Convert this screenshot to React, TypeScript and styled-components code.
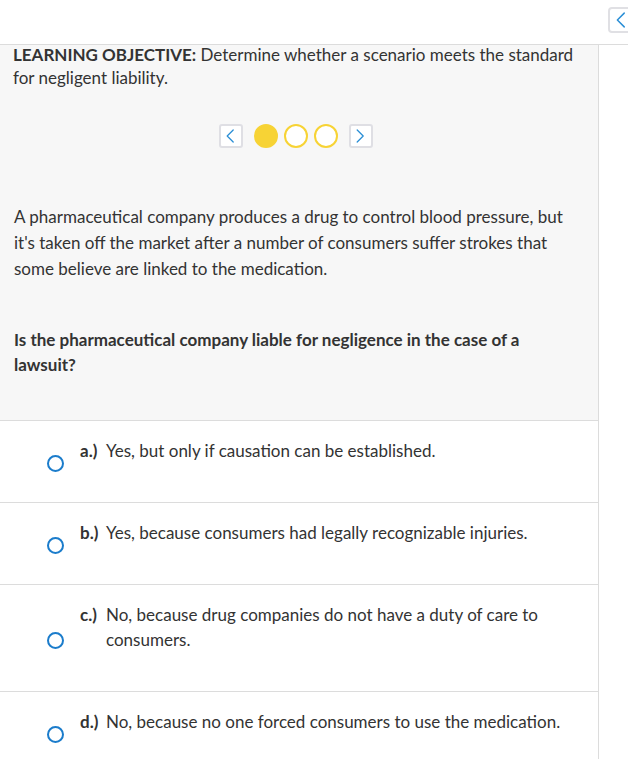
import React from "react";
import styled, { createGlobalStyle } from "styled-components";

const Global = createGlobalStyle`
  html, body { margin: 0; padding: 0; background: #fff; }
  body { font-family: Lato, "Open Sans", "Liberation Sans", sans-serif; color: #333; }
  * { box-sizing: border-box; }
`;

const Page = styled.div`
  display: flex;
  flex-direction: column;
  width: 628px;
  min-height: 759px;
  overflow: hidden;
`;

const TopBar = styled.div`
  height: 45px;
  border-bottom: 1px solid #dcdcdc;
  display: flex;
  justify-content: flex-end;
  align-items: flex-start;
  padding-top: 7px;
`;

const CornerButton = styled.button`
  width: 26px;
  height: 26px;
  margin-right: -6px;
  border: 2px solid #e0e0e4;
  border-radius: 4px;
  background: #fff;
  padding: 0;
  display: flex;
  align-items: center;
  justify-content: center;
`;

const Body = styled.div`
  display: flex;
`;

const Main = styled.div`
  width: 599px;
  border-right: 1px solid #dcdcdc;
  display: flex;
  flex-direction: column;
`;

const Prompt = styled.div`
  background: #f7f7f7;
  padding: 0 20px 0 13px;
  display: flex;
  flex-direction: column;
`;

const Objective = styled.p`
  margin: -2px 0 0;
  font-size: 17px;
  line-height: 23px;
  color: #333;
`;

const Strong = styled.span`
  font-weight: 700;
`;

const Pager = styled.div`
  display: flex;
  align-items: center;
  justify-content: center;
  gap: 6px;
  margin-top: 35px;
`;

const NavButton = styled.button<{ $side: "left" | "right" }>`
  width: 24px;
  height: 24px;
  border: 2px solid #dfdfe4;
  border-radius: 3px;
  background: #fff;
  padding: 0;
  display: flex;
  align-items: center;
  justify-content: center;
  margin: ${(p) => (p.$side === "left" ? "0 5px 0 0" : "0 0 0 5px")};
`;

const Dot = styled.span<{ $filled?: boolean }>`
  width: 24px;
  height: 24px;
  border-radius: 50%;
  border: 2px solid #f7d335;
  background: ${(p) => (p.$filled ? "#f7d335" : "#fff")};
`;

const Scenario = styled.p`
  margin: 56px 0 0 1px;
  font-size: 17px;
  line-height: 26px;
  color: #333;
`;

const Question = styled.p`
  margin: 45px 0 0 1px;
  padding-bottom: 43px;
  font-size: 17px;
  line-height: 25px;
  font-weight: 700;
  color: #333;
`;

const Option = styled.div`
  display: flex;
  align-items: center;
  border-top: 1px solid #dcdcdc;
  padding-left: 47px;
`;

const Radio = styled.span`
  flex: none;
  width: 17px;
  height: 17px;
  border-radius: 50%;
  border: 2px solid #1b7ccb;
  margin-top: 4px;
  margin-right: 16px;
`;

const OptionText = styled.div`
  display: flex;
  padding: 17px 20px 39px 0;
  font-size: 17px;
  line-height: 25px;
  color: #333;
`;

const Letter = styled.span`
  font-weight: 700;
  flex: none;
  width: 26px;
`;

const Chevron = ({ dir, size = 14 }: { dir: "left" | "right"; size?: number }) => (
  <svg width={size * 0.6} height={size} viewBox="0 0 8 14" fill="none">
    <path
      d={dir === "left" ? "M7 1 L1 7 L7 13" : "M1 1 L7 7 L1 13"}
      stroke="#2b8fd6"
      strokeWidth="1.3"
      strokeLinecap="round"
      strokeLinejoin="round"
    />
  </svg>
);

const options = [
  { l: "a.)", t: "Yes, but only if causation can be established." },
  { l: "b.)", t: "Yes, because consumers had legally recognizable injuries." },
  { l: "c.)", t: "No, because drug companies do not have a duty of care to consumers." },
  { l: "d.)", t: "No, because no one forced consumers to use the medication." },
];

export default function App() {
  return (
    <>
      <Global />
      <Page>
        <TopBar>
          <CornerButton aria-label="collapse">
            <Chevron dir="left" size={16} />
          </CornerButton>
        </TopBar>
        <Body>
          <Main>
            <Prompt>
              <Objective>
                <Strong>LEARNING OBJECTIVE:</Strong> Determine whether a scenario meets the standard for negligent liability.
              </Objective>
              <Pager>
                <NavButton $side="left" aria-label="previous">
                  <Chevron dir="left" />
                </NavButton>
                <Dot $filled />
                <Dot />
                <Dot />
                <NavButton $side="right" aria-label="next">
                  <Chevron dir="right" />
                </NavButton>
              </Pager>
              <Scenario>
                A pharmaceutical company produces a drug to control blood pressure, but it's taken off the market after a number of consumers suffer strokes that some believe are linked to the medication.
              </Scenario>
              <Question>Is the pharmaceutical company liable for negligence in the case of a lawsuit?</Question>
            </Prompt>
            {options.map((o) => (
              <Option key={o.l}>
                <Radio />
                <OptionText>
                  <Letter>{o.l}</Letter>
                  <span>{o.t}</span>
                </OptionText>
              </Option>
            ))}
          </Main>
        </Body>
      </Page>
    </>
  );
}
